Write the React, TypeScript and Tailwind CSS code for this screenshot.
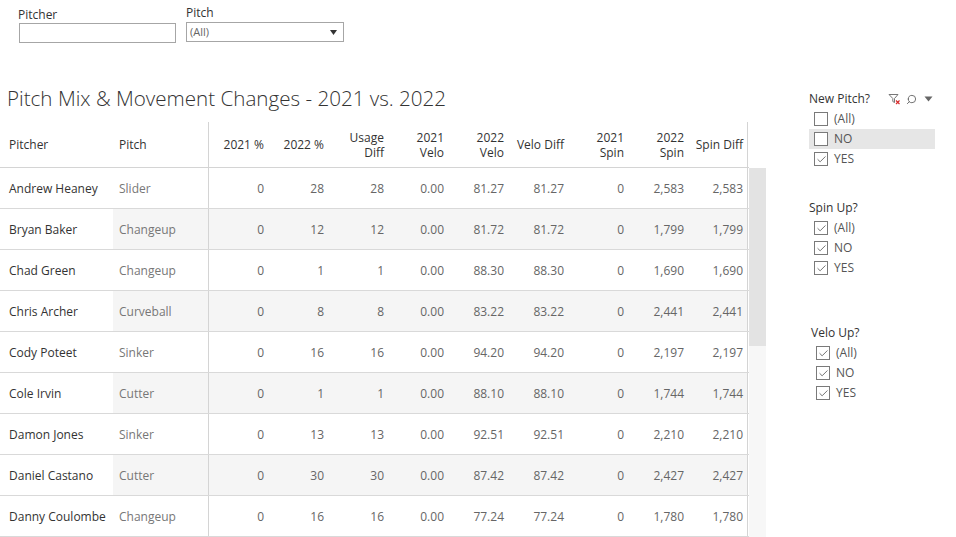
import { Check, Search } from "lucide-react";

type Row = {
    pitcher: string;
    pitch: string;
    values: string[];
};

const rows: Row[] = [
    { pitcher: "Andrew Heaney", pitch: "Slider", values: ["0", "28", "28", "0.00", "81.27", "81.27", "0", "2,583", "2,583"] },
    { pitcher: "Bryan Baker", pitch: "Changeup", values: ["0", "12", "12", "0.00", "81.72", "81.72", "0", "1,799", "1,799"] },
    { pitcher: "Chad Green", pitch: "Changeup", values: ["0", "1", "1", "0.00", "88.30", "88.30", "0", "1,690", "1,690"] },
    { pitcher: "Chris Archer", pitch: "Curveball", values: ["0", "8", "8", "0.00", "83.22", "83.22", "0", "2,441", "2,441"] },
    { pitcher: "Cody Poteet", pitch: "Sinker", values: ["0", "16", "16", "0.00", "94.20", "94.20", "0", "2,197", "2,197"] },
    { pitcher: "Cole Irvin", pitch: "Cutter", values: ["0", "1", "1", "0.00", "88.10", "88.10", "0", "1,744", "1,744"] },
    { pitcher: "Damon Jones", pitch: "Sinker", values: ["0", "13", "13", "0.00", "92.51", "92.51", "0", "2,210", "2,210"] },
    { pitcher: "Daniel Castano", pitch: "Cutter", values: ["0", "30", "30", "0.00", "87.42", "87.42", "0", "2,427", "2,427"] },
    { pitcher: "Danny Coulombe", pitch: "Changeup", values: ["0", "16", "16", "0.00", "77.24", "77.24", "0", "1,780", "1,780"] },
];

const headers: string[][] = [
    ["2021 %"],
    ["2022 %"],
    ["Usage", "Diff"],
    ["2021", "Velo"],
    ["2022", "Velo"],
    ["Velo Diff"],
    ["2021", "Spin"],
    ["2022", "Spin"],
    ["Spin Diff"],
];

function CheckBox({ checked }: { checked: boolean }) {
    return (
        <span className="flex h-[14px] w-[14px] items-center justify-center border border-[#7a7a7a] bg-white">
            {checked && <Check size={11} strokeWidth={1.8} className="text-[#555]" />}
        </span>
    );
}

function FilterGroup({
    title,
    items,
    highlight,
    icons,
}: {
    title: string;
    items: { label: string; checked: boolean }[];
    highlight?: number;
    icons?: boolean;
}) {
    return (
        <div className="w-[126px]">
            <div className="flex h-[20px] items-center justify-between">
                <span className="text-[12px] text-[#333]">{title}</span>
                {icons && (
                    <div className="flex items-center gap-[5px] pr-[2px] text-[#666]">
                        <svg width="13" height="12" viewBox="0 0 13 12">
                            <path d="M1 1.5h9L6.5 5.5v4L4.8 8.5v-3z" fill="none" stroke="#777" strokeWidth="1" />
                            <path d="M8 7.5l3.5 3.5M11.5 7.5L8 11" stroke="#d62c2c" strokeWidth="1.2" />
                        </svg>
                        <Search size={11} strokeWidth={2} className="-scale-x-100 text-[#666]" />
                        <svg width="9" height="6" viewBox="0 0 9 6" className="ml-[2px]">
                            <path d="M0.5 0.5h8L4.5 5.5z" fill="#666" />
                        </svg>
                    </div>
                )}
            </div>
            <div className="flex flex-col">
                {items.map((item, i) => (
                    <div
                        key={item.label}
                        className={`flex h-[20px] items-center gap-[6px] pl-[5px] ${
                            highlight === i ? "bg-[#e6e6e6]" : ""
                        }`}
                    >
                        <CheckBox checked={item.checked} />
                        <span className="text-[12px] text-[#555]">{item.label}</span>
                    </div>
                ))}
            </div>
        </div>
    );
}

export default function App() {
    return (
        <div className="h-[537px] w-[956px] overflow-hidden bg-white font-['Open_Sans',sans-serif] text-[#333]">
            {/* Top parameter controls */}
            <div className="flex gap-[10px] pl-[18px] pt-[5px]">
                <div className="w-[158px]">
                    <div className="h-[18px] pt-[1px] text-[12px] leading-[18px] text-[#333]">Pitcher</div>
                    <div className="ml-[1px] h-[20px] border border-[#a6a6a6] bg-white" />
                </div>
                <div className="w-[158px]">
                    <div className="h-[17px] text-[12px] leading-[16px] text-[#333]">Pitch</div>
                    <div className="flex h-[20px] items-center justify-between border border-[#a6a6a6] bg-white pl-[3px] pr-[6px]">
                        <span className="text-[11px] text-[#666]">(All)</span>
                        <svg width="7" height="5" viewBox="0 0 7 5">
                            <path d="M0 0h7L3.5 5z" fill="#333" />
                        </svg>
                    </div>
                </div>
            </div>

            <div className="mt-[43px] flex">
                {/* Main worksheet */}
                <div className="w-[809px] shrink-0">
                    <h1 className="h-[36px] pl-[7px] text-[20.6px] leading-[25px] font-light text-[#333]">
                        Pitch Mix &amp; Movement Changes - 2021 vs. 2022
                    </h1>

                    <div className="flex">
                        <div className="w-[749px]">
                            {/* Header */}
                            <div className="grid h-[46px] grid-cols-[113px_95px_repeat(9,60px)] border-b border-[#d4d4d4] text-[12px] leading-[15px] text-[#333]">
                                <div className="flex items-center pl-[9px]">Pitcher</div>
                                <div className="flex items-center pl-[6px]">Pitch</div>
                                {headers.map((h, i) => (
                                    <div
                                        key={i}
                                        className={`flex flex-col items-end justify-center pr-[4px] text-right ${
                                            i === 0 ? "border-l border-[#d4d4d4]" : ""
                                        } ${i === 8 ? "border-r border-[#d4d4d4]" : ""}`}
                                    >
                                        {h.map((line) => (
                                            <span key={line} className="whitespace-nowrap">
                                                {line}
                                            </span>
                                        ))}
                                    </div>
                                ))}
                            </div>

                            {/* Body */}
                            {rows.map((row, r) => (
                                <div
                                    key={row.pitcher}
                                    className="grid h-[41px] grid-cols-[113px_95px_repeat(9,60px)] border-b border-[#d9d9d9] text-[12px]"
                                >
                                    <div className="flex items-center whitespace-nowrap pl-[9px] pt-[1px] text-[#333]">{row.pitcher}</div>
                                    <div
                                        className={`flex items-center pl-[6px] pt-[1px] text-[#777] ${r % 2 === 1 ? "bg-[#f5f5f5]" : ""}`}
                                    >
                                        {row.pitch}
                                    </div>
                                    {row.values.map((v, i) => (
                                        <div
                                            key={i}
                                            className={`flex items-center justify-end pr-[4px] pt-[1px] text-[#666] ${
                                                r % 2 === 1 ? "bg-[#f5f5f5]" : ""
                                            } ${i === 0 ? "border-l border-[#d4d4d4]" : ""} ${
                                                i === 8 ? "border-r border-[#d4d4d4]" : ""
                                            }`}
                                        >
                                            {v}
                                        </div>
                                    ))}
                                </div>
                            ))}
                        </div>

                        {/* Scrollbar */}
                        <div className="mt-[46px] flex h-[400px] w-[17px] flex-col bg-[#f7f7f7]">
                            <div className="h-[178px] bg-[#e3e3e3]" />
                        </div>
                    </div>
                </div>

                {/* Filter panel */}
                <div className="flex flex-col pt-[3px]">
                    <FilterGroup
                        title="New Pitch?"
                        icons
                        highlight={1}
                        items={[
                            { label: "(All)", checked: false },
                            { label: "NO", checked: false },
                            { label: "YES", checked: true },
                        ]}
                    />
                    <div className="mt-[29px]">
                        <FilterGroup
                            title="Spin Up?"
                            items={[
                                { label: "(All)", checked: true },
                                { label: "NO", checked: true },
                                { label: "YES", checked: true },
                            ]}
                        />
                    </div>
                    <div className="mt-[45px] pl-[2px]">
                        <FilterGroup
                            title="Velo Up?"
                            items={[
                                { label: "(All)", checked: true },
                                { label: "NO", checked: true },
                                { label: "YES", checked: true },
                            ]}
                        />
                    </div>
                </div>
            </div>
        </div>
    );
}
